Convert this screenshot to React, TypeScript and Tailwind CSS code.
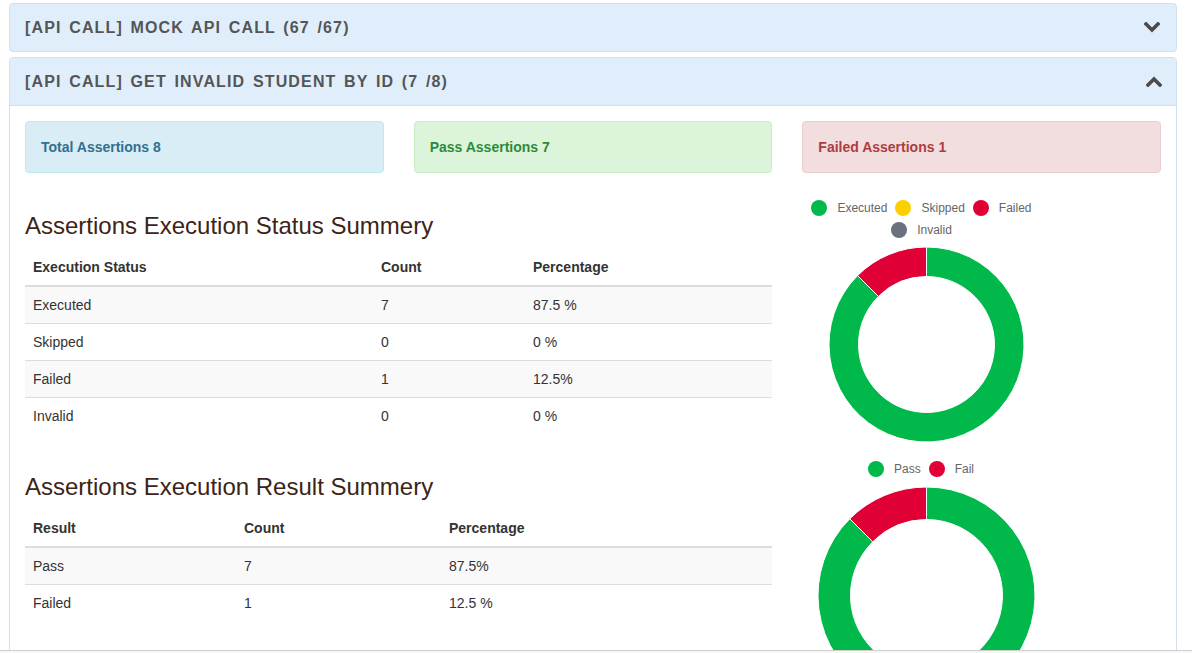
import React from "react";

type Slice = { value: number; color: string };

const GREEN = "#00b94a";
const RED = "#e10035";
const YELLOW = "#fcd000";
const GRAY = "#6b717d";

function arc(cx: number, cy: number, R: number, r: number, f0: number, f1: number) {
  const pt = (rad: number, f: number) => {
    const a = 2 * Math.PI * f;
    return `${(cx + rad * Math.sin(a)).toFixed(2)} ${(cy - rad * Math.cos(a)).toFixed(2)}`;
  };
  const large = f1 - f0 > 0.5 ? 1 : 0;
  return `M ${pt(R, f0)} A ${R} ${R} 0 ${large} 1 ${pt(R, f1)} L ${pt(r, f1)} A ${r} ${r} 0 ${large} 0 ${pt(r, f0)} Z`;
}

function Donut({ size, inner, data }: { size: number; inner: number; data: Slice[] }) {
  const total = data.reduce((s, d) => s + d.value, 0);
  const c = size / 2;
  let acc = 0;
  return (
    <svg width={size} height={size} viewBox={`0 0 ${size} ${size}`} className="block shrink-0">
      {data
        .filter((d) => d.value > 0)
        .map((d, i) => {
          const f0 = acc / total;
          acc += d.value;
          const f1 = acc / total;
          return (
            <path
              key={i}
              d={arc(c, c, c, inner, f0, f1)}
              fill={d.color}
              stroke="#fff"
              strokeWidth={1}
            />
          );
        })}
    </svg>
  );
}

function LegendItem({ color, label }: { color: string; label: string }) {
  return (
    <div className="flex items-center gap-[10px]">
      <span className="block w-[16px] h-[16px] rounded-full" style={{ background: color }} />
      <span className="text-[12px] leading-[16px] text-[#666]">{label}</span>
    </div>
  );
}

function Chevron({ up }: { up?: boolean }) {
  return (
    <svg width="16" height="11" viewBox="0 0 16 11" className="block">
      <polyline
        points={up ? "2,9 8,3 14,9" : "2,2 8,8 14,2"}
        fill="none"
        stroke="#4a4a4a"
        strokeWidth="3.6"
        strokeLinecap="square"
      />
    </svg>
  );
}

function Alert({ text, cls }: { text: string; cls: string }) {
  return (
    <div className={`py-[15px] px-[15px] border rounded-[4px] text-[14px] leading-[20px] font-bold ${cls}`}>
      {text}
    </div>
  );
}

const statusRows = [
  ["Executed", "7", "87.5 %"],
  ["Skipped", "0", "0 %"],
  ["Failed", "1", "12.5%"],
  ["Invalid", "0", "0 %"],
];

const resultRows = [
  ["Pass", "7", "87.5%"],
  ["Failed", "1", "12.5 %"],
];

function SummaryTable({
  head,
  rows,
  widths,
}: {
  head: string[];
  rows: string[][];
  widths: string[];
}) {
  return (
    <table className="w-full border-collapse text-[14px] text-[#333]">
      <thead>
        <tr>
          {head.map((h, i) => (
            <th
              key={h}
              className={`${widths[i]} text-left font-bold px-[8px] py-[8px] leading-[20px] border-b-2 border-[#ddd]`}
            >
              {h}
            </th>
          ))}
        </tr>
      </thead>
      <tbody>
        {rows.map((r, i) => (
          <tr key={i} className={i % 2 === 0 ? "bg-[#f9f9f9]" : ""}>
            {r.map((c, j) => (
              <td key={j} className="px-[8px] py-[8px] leading-[20px] border-t border-[#ddd]">
                {c}
              </td>
            ))}
          </tr>
        ))}
      </tbody>
    </table>
  );
}

export default function App() {
  return (
    <div className="w-[1192px] h-[653px] bg-white flex flex-col font-['Liberation_Sans',Arial,sans-serif] overflow-hidden">
      <div className="h-[650px] overflow-hidden pl-[9px] pr-[15px] pt-[3px]">
        {/* collapsed panel */}
        <div className="border border-[#d2dfec] rounded-[4px] bg-[#e0eefc] h-[49px] flex items-center justify-between pl-[15px] pr-[16px]">
          <span className="text-[16px] font-bold tracking-[1.15px] [word-spacing:2px] text-[#555] uppercase">
            [API CALL] MOCK API CALL (67 /67)
          </span>
          <Chevron />
        </div>

        {/* expanded panel */}
        <div className="mt-[5px] border border-[#d2dfec] rounded-t-[4px] bg-white">
          <div className="h-[48px] bg-[#e0eefc] border-b border-[#d2dfec] flex items-center justify-between pl-[15px] pr-[14px]">
            <span className="text-[16px] font-bold tracking-[1.15px] [word-spacing:2px] text-[#555] uppercase">
              [API CALL] GET INVALID STUDENT BY ID (7 /8)
            </span>
            <Chevron up />
          </div>

          <div className="p-[15px]">
            <div className="grid grid-cols-3 gap-[30px]">
              <Alert text="Total Assertions 8" cls="bg-[#d9edf7] border-[#bce8f1] text-[#31708f]" />
              <Alert text="Pass Assertions 7" cls="bg-[#dcf5da] border-[#c9eec4] text-[#2e8a3b]" />
              <Alert text="Failed Assertions 1" cls="bg-[#f2dede] border-[#ebccd1] text-[#ad3d3d]" />
            </div>

            <div className="mt-[20px] grid grid-cols-[747px_359px] gap-x-[30px]">
              <div className="pb-[20px]">
                <h3 className="mt-[20px] mb-[10px] text-[24px] leading-[26px] text-[#3d2416]">
                  Assertions Execution Status Summery
                </h3>
                <SummaryTable
                  head={["Execution Status", "Count", "Percentage"]}
                  rows={statusRows}
                  widths={["w-[348px]", "w-[152px]", ""]}
                />
              </div>
              <div className="w-[249px] flex flex-col items-center">
                <div className="mt-[7px] mr-[10px] flex flex-col items-center gap-[6px]">
                  <div className="flex items-center gap-[8px]">
                    <LegendItem color={GREEN} label="Executed" />
                    <LegendItem color={YELLOW} label="Skipped" />
                    <LegendItem color={RED} label="Failed" />
                  </div>
                  <LegendItem color={GRAY} label="Invalid" />
                </div>
                <div className="mt-[9px]">
                  <Donut
                    size={195}
                    inner={68}
                    data={[
                      { value: 7, color: GREEN },
                      { value: 0, color: YELLOW },
                      { value: 1, color: RED },
                      { value: 0, color: GRAY },
                    ]}
                  />
                </div>
              </div>

              <div>
                <h3 className="mt-[20px] mb-[10px] text-[24px] leading-[26px] text-[#3d2416]">
                  Assertions Execution Result Summery
                </h3>
                <SummaryTable
                  head={["Result", "Count", "Percentage"]}
                  rows={resultRows}
                  widths={["w-[211px]", "w-[205px]", ""]}
                />
              </div>
              <div className="w-[249px] flex flex-col items-center">
                <div className="mt-[7px] mr-[11px] flex items-center gap-[8px]">
                  <LegendItem color={GREEN} label="Pass" />
                  <LegendItem color={RED} label="Fail" />
                </div>
                <div className="mt-[10px]">
                  <Donut
                    size={217}
                    inner={76}
                    data={[
                      { value: 7, color: GREEN },
                      { value: 1, color: RED },
                    ]}
                  />
                </div>
              </div>
            </div>
          </div>
        </div>
      </div>
      <div className="h-[3px] border-t border-[#cfcfcf] bg-[#f6f6f6]" />
    </div>
  );
}
